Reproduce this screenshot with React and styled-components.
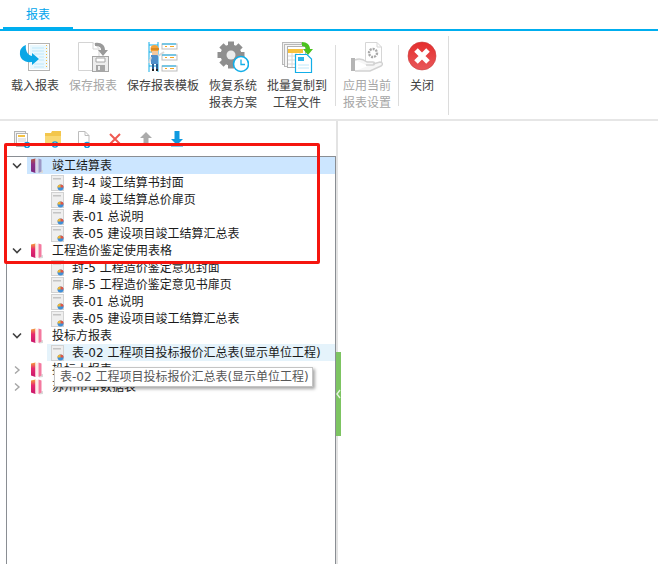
import React from "react";
import styled, { createGlobalStyle } from "styled-components";

const GlobalStyle = createGlobalStyle`
  html, body {
    margin: 0;
    padding: 0;
    background: #fff;
  }
  body {
    font-family: "DejaVu Sans", "Noto Sans CJK SC", sans-serif;
    font-size: 12px;
  }
`;

const Page = styled.div`
  position: relative;
  width: 658px;
  height: 564px;
  overflow: hidden;
  display: flex;
  flex-direction: column;
`;

const TabBar = styled.div`
  height: 29px;
  padding-left: 3px;
  border-bottom: 2px solid #00aeef;
  display: flex;
  flex-shrink: 0;
`;

const Tab = styled.div`
  width: 70px;
  height: 27px;
  line-height: 30px;
  text-align: center;
  color: #00a5ec;
  border-bottom: 2px solid #00aeef;
`;

const Ribbon = styled.div`
  height: 83px;
  padding: 5px 0 0 6px;
  border-bottom: 2px solid #e6e6e6;
  display: flex;
  align-items: flex-start;
  flex-shrink: 0;
`;

const RibbonButton = styled.div`
  padding: 5px 5px 0;
  display: flex;
  flex-direction: column;
  align-items: center;
  color: ${(p) => (p.$disabled ? "#a6a6a6" : "#404040")};
`;

const IconSlot = styled.div`
  width: 34px;
  height: 32px;
  display: flex;
  justify-content: center;
`;

const Label = styled.div`
  margin-top: 5px;
  line-height: 17px;
  text-align: center;
  white-space: nowrap;
`;

const RibbonDivider = styled.div`
  width: 1px;
  height: ${(p) => p.$h}px;
  margin: ${(p) => p.$top}px ${(p) => p.$right}px 0 ${(p) => p.$left}px;
  background: #dcdcdc;
`;

const Body = styled.div`
  flex: 1;
  display: flex;
  min-height: 0;
`;

const LeftPane = styled.div`
  width: 338px;
  padding-left: 6px;
  box-sizing: border-box;
  display: flex;
  flex-direction: column;
  border-right: 2px solid #e3e3e3;
  flex-shrink: 0;
`;

const MiniToolbar = styled.div`
  height: 35px;
  padding: 9px 0 0 6px;
  box-sizing: border-box;
  display: flex;
  gap: 11px;
  flex-shrink: 0;
`;

const MiniButton = styled.div`
  width: 20px;
  height: 18px;
  display: flex;
  justify-content: center;
`;

const Tree = styled.div`
  flex: 1;
  border: solid #8a8e93;
  border-width: 1px 1px 0 1px;
`;

const Row = styled.div`
  height: 17px;
  display: flex;
  align-items: center;
  position: relative;
  white-space: nowrap;
  color: #1a1a1a;
  padding-left: ${(p) => (p.$child ? 44 : 5)}px;
`;

const Highlight = styled.div`
  position: absolute;
  top: 0;
  bottom: 0;
  right: 0;
  left: ${(p) => (p.$child ? 40 : 20)}px;
  background: ${(p) => (p.$child ? "#e5f3fb" : "#cce6ff")};
`;

const Caret = styled.svg`
  width: 10px;
  height: 8px;
  margin-right: 8px;
  position: relative;
  flex-shrink: 0;
`;

const TreeIcon = styled.svg`
  position: relative;
  flex-shrink: 0;
`;

const RowText = styled.span`
  position: relative;
  line-height: 17px;
  margin-top: 2px;
  margin-left: ${(p) => p.$gap}px;
`;

const RightPane = styled.div`
  flex: 1;
  background: #fff;
`;

const Annotation = styled.div`
  position: absolute;
  left: 4px;
  top: 143px;
  width: 316px;
  height: 121px;
  box-sizing: border-box;
  border: 3px solid #f5150f;
  border-radius: 2px;
`;

const Tooltip = styled.div`
  position: absolute;
  left: 54px;
  top: 367px;
  width: 259px;
  height: 20px;
  box-sizing: border-box;
  padding-left: 5px;
  line-height: 18px;
  color: #575757;
  background: #fff;
  border: 1px solid #c4c4c4;
  box-shadow: 2px 2px 3px rgba(0, 0, 0, 0.35);
  white-space: nowrap;
`;

const Handle = styled.div`
  position: absolute;
  left: 336px;
  top: 352px;
  width: 5px;
  height: 84px;
  background: #7dc462;
  display: flex;
  align-items: center;
  justify-content: center;
`;

const LoadIcon = () => (
  <svg width="32" height="32" viewBox="0 0 32 32">
    <rect x="9.5" y="2.5" width="21" height="27" fill="#fff" stroke="#b4b4b4" />
    <rect x="11" y="4" width="18" height="24" fill="#eaf8fe" />
    <path d="M13 7h12M13 10h12M15 13h10M20 16h5M20 19h5M15 23h10M15 26h10" stroke="#bfe8fa" />
    <path d="M27.5 4v24" stroke="#f5b942" strokeDasharray="1 2" />
    <path d="M7 4C6 8 8 14 13 15V12L20 18L13 24V21C6 22 0 18 1 11C1 8 4 5 7 4Z" fill="#0aa7e6" />
  </svg>
);

const SaveIcon = () => (
  <svg width="32" height="32" viewBox="0 0 32 32">
    <path d="M1.5 1.5H16L22 7.5V29.5H1.5Z" fill="#fff" stroke="#d4d4d4" />
    <path d="M16 1.5V8H22" fill="none" stroke="#d4d4d4" />
    <path d="M18 2 C24 1 28 4 28 9 H31 L26 15 L21 9 H24 C24 6 22 5 18 5Z" fill="#9a9a9a" />
    <rect x="15.5" y="15.5" width="16" height="15" fill="#ededed" stroke="#a6a6a6" />
    <path d="M19 17H28V21H19Z" fill="#fff" stroke="#a6a6a6" />
    <rect x="19" y="24" width="9" height="6" fill="#a6a6a6" />
    <rect x="21" y="25" width="2" height="4" fill="#ededed" />
  </svg>
);

const TemplateIcon = () => (
  <svg width="32" height="32" viewBox="0 0 32 32">
    <path d="M2 1V31M11 1V31" stroke="#12aee8" strokeWidth="1" fill="none" />
    <path d="M2 4H11M2 11H5M2 18H7M2 25H11" stroke="#12aee8" />
    <circle cx="7.5" cy="8" r="4" fill="#f5a33a" />
    <rect x="4" y="7" width="8" height="2" fill="#d98a22" />
    <rect x="5" y="10" width="6" height="4" fill="#f3c9a0" />
    <path d="M4 14H11V23H4Z" fill="#4f8fc9" />
    <path d="M4 16L2 22M11 15L17 11" stroke="#d9d9d9" strokeWidth="2" />
    <rect x="5" y="23" width="2" height="6" fill="#2d5f94" />
    <rect x="9" y="23" width="2" height="6" fill="#2d5f94" />
    <rect x="5" y="28" width="2" height="2" fill="#222" />
    <rect x="9" y="28" width="2" height="2" fill="#222" />
    {[3, 14, 25].map((y) => (
      <g key={y}>
        <rect x="15" y={y} width="15" height="5" fill="#fff" stroke="#bdbdbd" />
        <path d={`M15 ${y}H29`} stroke="#12aee8" />
        <path d={`M18 ${y + 2.5}H20M23 ${y + 2.5}H27`} stroke="#f5a623" />
      </g>
    ))}
  </svg>
);

const RestoreIcon = () => (
  <svg width="32" height="32" viewBox="0 0 32 32">
    {[0, 45, 90, 135].map((a) => (
      <rect key={a} x="11" y="0.5" width="6" height="27" fill="#8f8f8f" transform={`rotate(${a} 14 14)`} />
    ))}
    <circle cx="14" cy="14" r="10.5" fill="#8f8f8f" />
    <circle cx="14" cy="14" r="4.5" fill="#ececec" />
    <circle cx="24" cy="23" r="7.5" fill="#fff" stroke="#12aee8" strokeWidth="1.6" />
    <path d="M24 18.5V23.5H28" fill="none" stroke="#12aee8" strokeWidth="1.3" />
  </svg>
);

const BatchIcon = () => (
  <svg width="32" height="32" viewBox="0 0 32 32">
    <rect x="1.5" y="1.5" width="19" height="22" fill="#f1f1f1" stroke="#b9b9b9" />
    <rect x="3.5" y="3.5" width="19" height="22" fill="#f6f6f6" stroke="#b9b9b9" />
    <rect x="6.5" y="5.5" width="18" height="21" fill="#fff" stroke="#b0b0b0" />
    <rect x="7" y="8" width="15" height="4" fill="#f8c23d" />
    <path d="M7 15H24M7 19H24M7 23H24M11 12V26M15 12V26M19 12V26" stroke="#d8d8d8" />
    <path d="M21 1 C26 1 29 4 29 8 H32 L27 14 L22 8 H25 C25 6 23 5 21 5Z" fill="#4cc31f" />
    <path d="M14.5 13.5H26L30.5 18V31.5H14.5Z" fill="#fff" stroke="#12aee8" strokeWidth="1.2" />
    <rect x="17" y="16" width="6" height="4" fill="#2db5ea" />
    <path d="M17 24H28M17 27H28" stroke="#bfe8fa" />
  </svg>
);

const ApplyIcon = () => (
  <svg width="32" height="32" viewBox="0 0 32 32">
    <path d="M14.5 1.5H26L30.5 6V23.5H14.5Z" fill="#fff" stroke="#d6d6d6" />
    <path d="M26 1.5V6H30.5" fill="none" stroke="#d6d6d6" />
    <circle cx="22" cy="12" r="4" fill="none" stroke="#a8a8a8" strokeWidth="2.4" strokeDasharray="2 1" />
    <rect x="0" y="17" width="4" height="13" fill="#b5b5b5" />
    <path d="M4 19 C8 17 12 18 16 21 H22 C24 21 24 24 22 24 H15 M22 23 L29 21 C32 21 32 24 30 25 L19 30 H4" fill="#f6f6f6" stroke="#d2d2d2" strokeWidth="1.4" />
  </svg>
);

const CloseIcon = () => (
  <svg width="30" height="30" viewBox="0 0 30 30">
    <defs>
      <linearGradient id="closeFill" x1="0" y1="0" x2="0" y2="1">
        <stop offset="0" stopColor="#e52d2d" />
        <stop offset="1" stopColor="#e8585a" />
      </linearGradient>
    </defs>
    <circle cx="15" cy="15" r="14" fill="url(#closeFill)" stroke="#c9403f" strokeWidth="0.6" />
    <path d="M9 9L21 21M21 9L9 21" stroke="#fff" strokeWidth="5" />
  </svg>
);

const MiniBadge = ({ x, y }) => (
  <g>
    <circle cx={x} cy={y} r="3.2" fill="#0f9ae0" />
    <rect x={x - 0.6} y={y - 2} width="1.2" height="4" fill="#fff" />
  </g>
);

const MiniIcon = ({ kind }) => {
  if (kind === "copy")
    return (
      <svg width="18" height="18" viewBox="0 0 18 18">
        <rect x="1.5" y="1.5" width="11" height="13" fill="#f3f3f3" stroke="#b5b5b5" />
        <rect x="3.5" y="3.5" width="11" height="13" fill="#fff" stroke="#b5b5b5" />
        <rect x="5" y="5" width="7" height="2" fill="#f5c242" />
        <path d="M5 9H13M5 11H13" stroke="#cfcfcf" />
        <MiniBadge x={14} y={15} />
      </svg>
    );
  if (kind === "folder")
    return (
      <svg width="18" height="18" viewBox="0 0 18 18">
        <path d="M1 3H7L8 1H17V15H1Z" fill="#f3c64c" />
        <path d="M1 6H17V15H1Z" fill="#f9d873" />
        <MiniBadge x={11} y={14.5} />
      </svg>
    );
  if (kind === "page")
    return (
      <svg width="18" height="18" viewBox="0 0 18 18">
        <path d="M3.5 1.5H10L14 5.5V15.5H3.5Z" fill="#fff" stroke="#bdbdbd" />
        <path d="M10 1.5V5.5H14" fill="none" stroke="#bdbdbd" />
        <MiniBadge x={12} y={15} />
      </svg>
    );
  if (kind === "del")
    return (
      <svg width="18" height="18" viewBox="0 0 18 18">
        <path d="M4 4L14 14M14 4L4 14" stroke="#ef5a52" strokeWidth="2" />
      </svg>
    );
  if (kind === "up")
    return (
      <svg width="18" height="18" viewBox="0 0 18 18">
        <path d="M9 2L15 8H11.5V15H6.5V8H3Z" fill="#ababab" />
      </svg>
    );
  return (
    <svg width="18" height="18" viewBox="0 0 18 18">
      <path d="M6.5 1H11.5V9H15L9 15L3 9H6.5Z" fill="#0f9ae0" />
      <rect x="3" y="15" width="12" height="1.5" fill="#0f9ae0" />
    </svg>
  );
};

const BookIcon = ({ selected }) => {
  const id = selected ? "bookSelected" : "bookPlain";
  return (
    <TreeIcon width="13" height="16" viewBox="0 0 13 16">
      <defs>
        <linearGradient id={id} x1="0" y1="0" x2="0" y2="1">
          <stop offset="0" stopColor={selected ? "#b4553f" : "#f5a13c"} />
          <stop offset="0.4" stopColor={selected ? "#8c2f86" : "#e62a6f"} />
          <stop offset="1" stopColor={selected ? "#7a2a80" : "#c9176b"} />
        </linearGradient>
      </defs>
      <path d="M9 13L13 12V15L9 15.5Z" fill="#d9d9d9" />
      <path d="M1 1.5L5.5 0.5V15L1 13.5Z" fill={`url(#${id})`} />
      <rect x="5.5" y="1" width="3" height="13.5" fill={selected ? "#d9d6e6" : "#fdeee9"} />
      <path d="M8.5 0.5L11.5 1.5V13.5L8.5 15Z" fill={selected ? "#9c97c6" : "#f4799f"} />
    </TreeIcon>
  );
};

const SheetIcon = () => (
  <TreeIcon width="13" height="16" viewBox="0 0 13 16">
    <rect x="0.5" y="0.5" width="12" height="15" fill="#efefef" stroke="#d2d2d2" />
    <rect x="2" y="3" width="8" height="1.5" fill="#c4c4c4" />
    <circle cx="9.5" cy="12.5" r="3" fill="#3f8fd8" />
    <path d="M9.5 12.5V9.5A3 3 0 0 1 12.5 12.5Z" fill="#e8543f" />
    <path d="M9.5 12.5H6.5A3 3 0 0 1 9.5 9.5Z" fill="#f2b632" />
  </TreeIcon>
);

const Chevron = ({ open }) => (
  <Caret viewBox="0 0 10 8">
    {open ? (
      <path d="M1 1.5L5 5.5L9 1.5" fill="none" stroke="#404040" strokeWidth="1.6" />
    ) : (
      <path d="M3 0.5L7 4L3 7.5" fill="none" stroke="#a6a6a6" strokeWidth="1.4" />
    )}
  </Caret>
);

const buttons = [
  { id: "load", lines: ["载入报表"], Icon: LoadIcon },
  { id: "save", lines: ["保存报表"], Icon: SaveIcon, disabled: true },
  { id: "tpl", lines: ["保存报表模板"], Icon: TemplateIcon },
  { id: "restore", lines: ["恢复系统", "报表方案"], Icon: RestoreIcon },
  { id: "batch", lines: ["批量复制到", "工程文件"], Icon: BatchIcon },
];

const tree = [
  { title: "竣工结算表", open: true, selected: true, kids: ["封-4 竣工结算书封面", "扉-4 竣工结算总价扉页", "表-01 总说明", "表-05 建设项目竣工结算汇总表"] },
  { title: "工程造价鉴定使用表格", open: true, kids: ["封-5 工程造价鉴定意见封面", "扉-5 工程造价鉴定意见书扉页", "表-01 总说明", "表-05 建设项目竣工结算汇总表"] },
  { title: "投标方报表", open: true, kids: ["表-02 工程项目投标报价汇总表(显示单位工程)"], hoverKid: 0 },
  { title: "投标人报表" },
  { title: "苏州市审数据表" },
];

const RibbonItem = ({ lines, Icon, disabled }) => (
  <RibbonButton $disabled={disabled}>
    <IconSlot>
      <Icon />
    </IconSlot>
    <Label>
      {lines.map((l) => (
        <div key={l}>{l}</div>
      ))}
    </Label>
  </RibbonButton>
);

const App = () => {
  return (
    <Page>
      <GlobalStyle />
      <TabBar>
        <Tab>报表</Tab>
      </TabBar>
      <Ribbon>
        {buttons.map((b) => (
          <RibbonItem key={b.id} {...b} />
        ))}
        <RibbonDivider $h={61} $top={9} $left={3} $right={2} />
        <RibbonItem lines={["应用当前", "报表设置"]} Icon={ApplyIcon} disabled />
        <RibbonDivider $h={61} $top={9} $left={2} $right={1} />
        <RibbonItem lines={["关闭"]} Icon={CloseIcon} />
        <RibbonDivider $h={79} $top={0} $left={4} $right={0} />
      </Ribbon>
      <Body>
        <LeftPane>
          <MiniToolbar>
            {["copy", "folder", "page", "del", "up", "down"].map((k) => (
              <MiniButton key={k}>
                <MiniIcon kind={k} />
              </MiniButton>
            ))}
          </MiniToolbar>
          <Tree>
            {tree.map((group) => (
              <React.Fragment key={group.title}>
                <Row>
                  {group.selected && <Highlight />}
                  <Chevron open={group.open} />
                  <BookIcon selected={group.selected} />
                  <RowText $gap={9}>{group.title}</RowText>
                </Row>
                {(group.kids || []).map((kid, i) => (
                  <Row $child key={kid}>
                    {group.hoverKid === i && <Highlight $child />}
                    <SheetIcon />
                    <RowText $gap={8}>{kid}</RowText>
                  </Row>
                ))}
              </React.Fragment>
            ))}
          </Tree>
        </LeftPane>
        <RightPane />
      </Body>
      <Handle>
        <svg width="5" height="10" viewBox="0 0 5 10">
          <path d="M4 1L1 5L4 9" fill="none" stroke="#e6f5df" strokeWidth="1.4" />
        </svg>
      </Handle>
      <Annotation />
      <Tooltip>表-02 工程项目投标报价汇总表(显示单位工程)</Tooltip>
    </Page>
  );
};

export default App;
